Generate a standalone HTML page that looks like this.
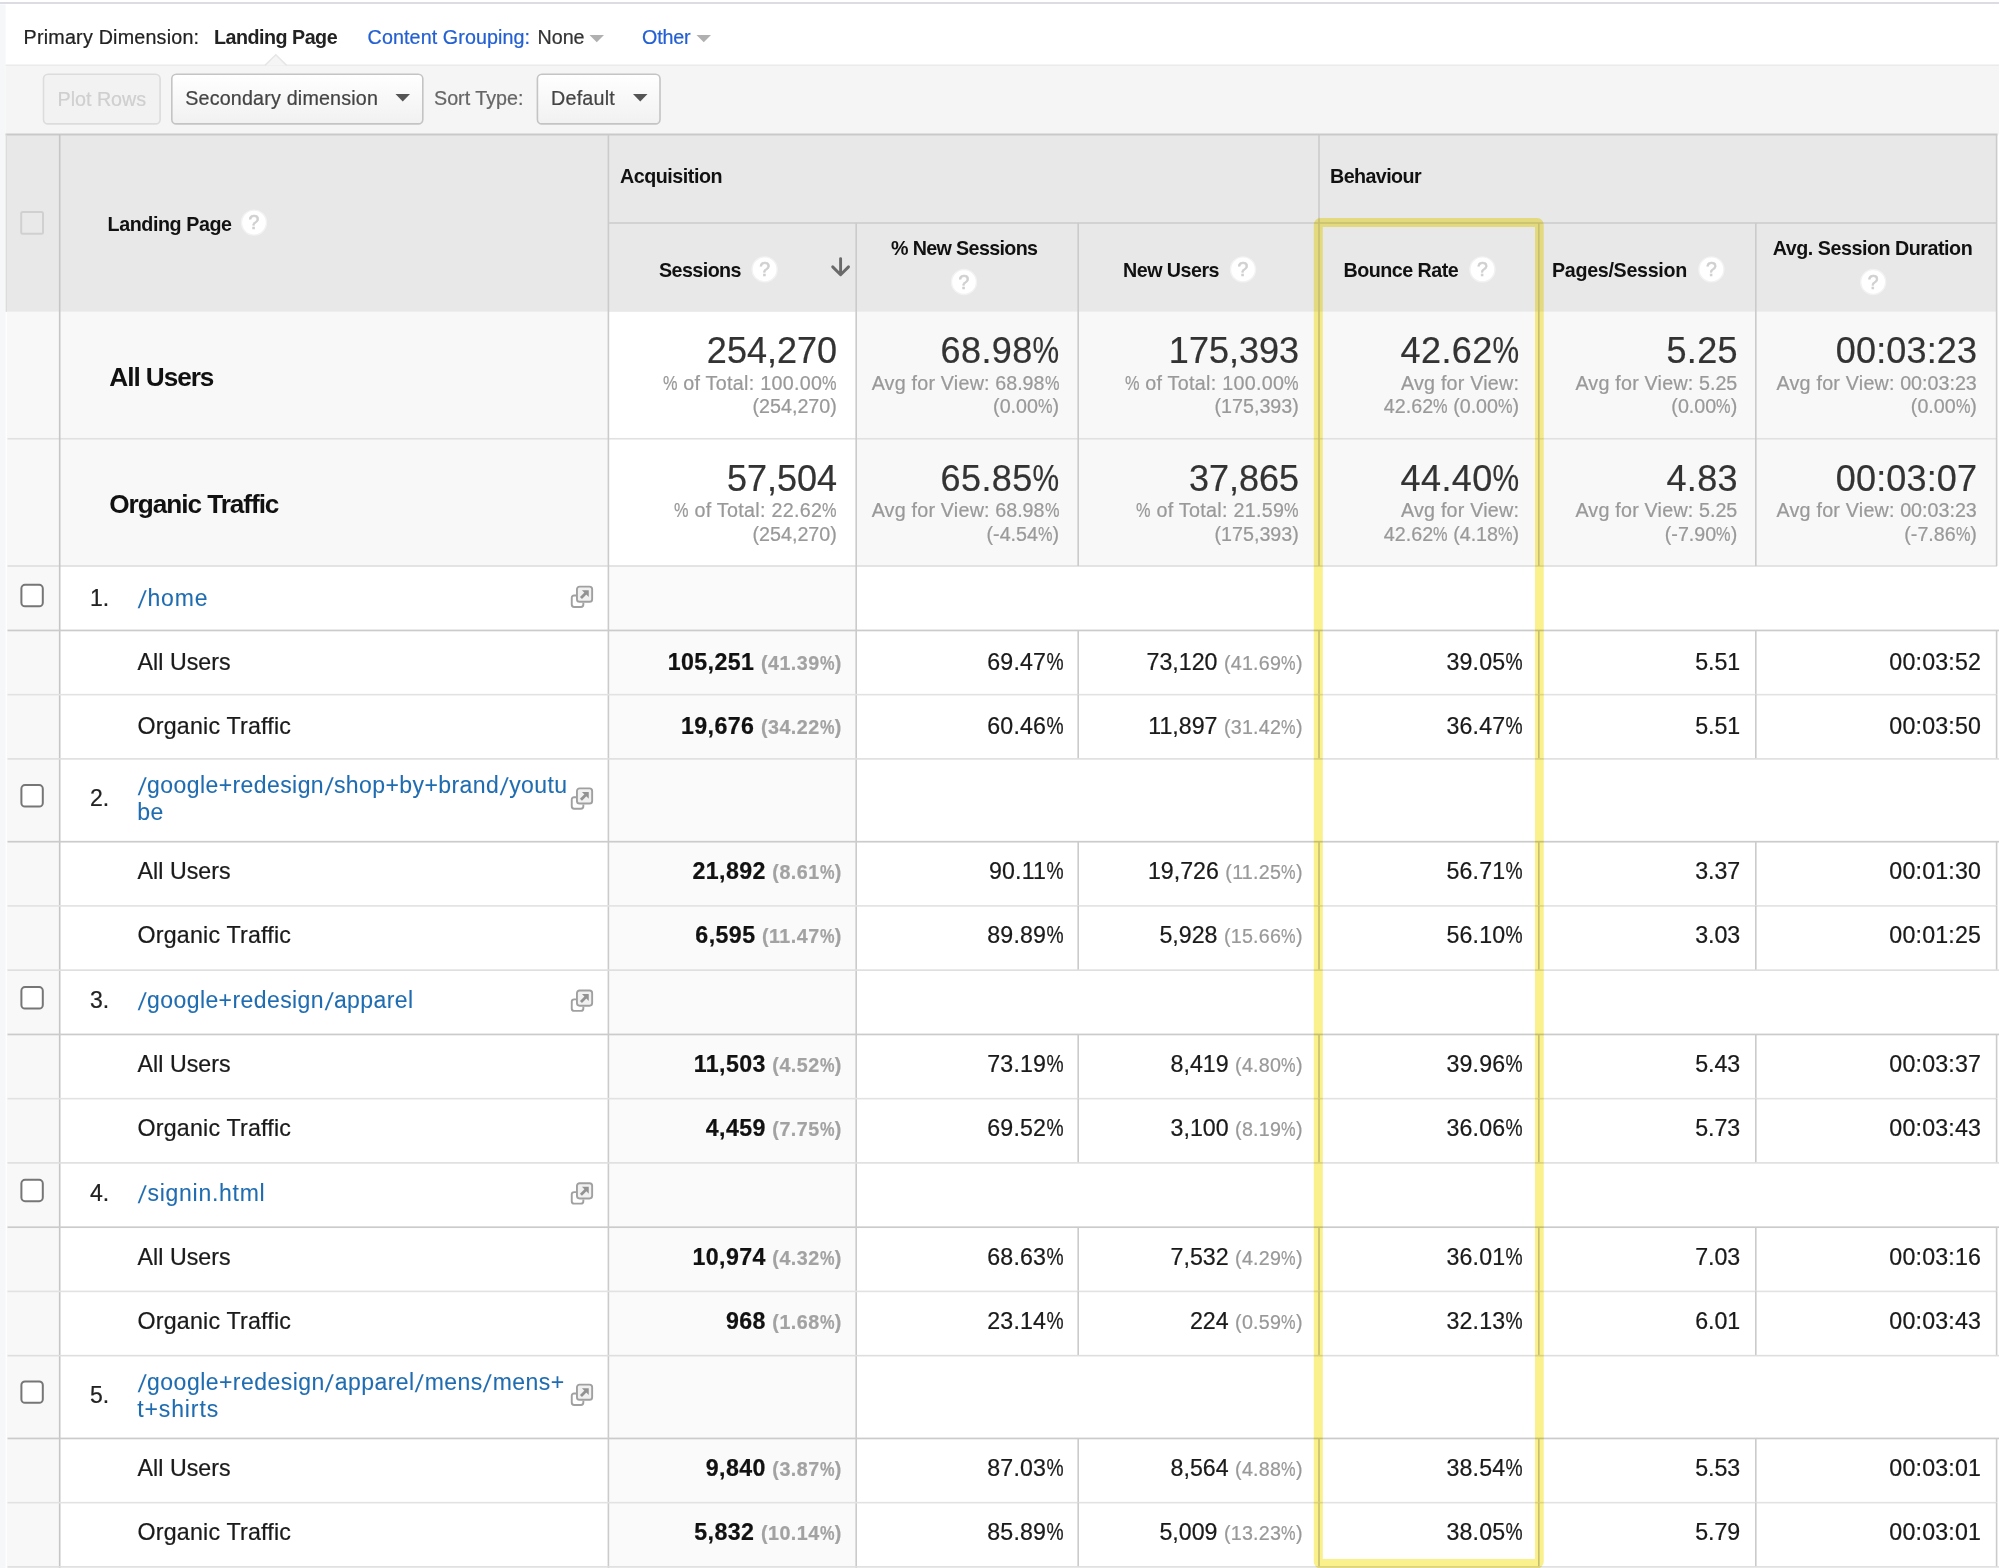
<!DOCTYPE html>
<html lang="en"><head><meta charset="utf-8"><title>Landing Pages</title>
<style>
html,body{margin:0;padding:0}
body{width:1999px;height:1568px;overflow:hidden;position:relative;background:#fff;font-family:"Liberation Sans", sans-serif;}
svg.bg,svg.fg{position:absolute;left:0;top:0}
.t{position:absolute;white-space:nowrap;display:block}
.hl{position:absolute;left:0;top:0;mix-blend-mode:multiply}

.t b,b{font-weight:700;letter-spacing:0.42px}
.p{font-size:19.7px;color:#999;font-weight:400;letter-spacing:0.25px}
.pc{display:inline-block;font-style:normal;transform:scaleX(.83);transform-origin:100% 50%;margin-left:-0.151em}
.sl{display:inline-block;font-style:normal;transform:translateY(0.045em) skewX(-8deg) scaleY(1.07);margin:0 0.067em}
.av{letter-spacing:0.22px}
.pb{font-weight:700;letter-spacing:0.5px;color:#a2a2a2}
</style></head>
<body>
<svg class="bg" width="1999" height="1568" viewBox="0 0 1999 1568">
<rect x="0" y="0" width="1999.00" height="1568.00" fill="#fff" />
<rect x="0" y="4.5" width="5.60" height="1563.50" fill="#f6f7f9" />
<rect x="0" y="2" width="1999.00" height="2.00" fill="#dcdce3" />
<rect x="5.6" y="65.4" width="1993.40" height="69.10" fill="#f5f5f5" />
<rect x="5.6" y="64.50" width="1993.40" height="1.4" fill="#e9e9e9"/>
<path d="M265.5 65.6 L275.8 55.2 L286.2 65.6 Z" fill="#f5f5f5"/><path d="M265 65.4 L275.8 54.8 L286.6 65.4" fill="none" stroke="#e6e6e6" stroke-width="1.5"/>
<rect x="6" y="134.5" width="1991.00" height="177.30" fill="#e8e8e8" />
<rect x="5.5" y="133.50" width="1992.00" height="2" fill="#c9c9c9"/>
<rect x="6.8" y="311.8" width="52.90" height="1256.20" fill="#f8f8f8" />
<rect x="59.7" y="311.8" width="548.70" height="254.20" fill="#f8f8f8" />
<rect x="856.2" y="311.8" width="1140.80" height="254.20" fill="#f8f8f8" />
<rect x="608.4" y="566" width="247.80" height="1002.00" fill="#fafafa" />
<rect x="608.4" y="222.20" width="1388.60" height="1.6" fill="#cdcdcd"/>
<rect x="7.5" y="437.95" width="1989.50" height="1.6" fill="#e1e1e1"/>
<rect x="7.5" y="565.20" width="1989.50" height="1.6" fill="#dedede"/>
<rect x="58.90" y="134.5" width="1.6" height="1433.50" fill="#c6c6c6"/>
<rect x="607.60" y="134.5" width="1.6" height="1433.50" fill="#cbcbcb"/>
<rect x="855.40" y="223" width="1.6" height="1345.00" fill="#cbcbcb"/>
<rect x="1077.40" y="223" width="1.6" height="343.00" fill="#cbcbcb"/>
<rect x="1318.20" y="134.5" width="1.6" height="431.50" fill="#cbcbcb"/>
<rect x="1538.00" y="223" width="1.6" height="343.00" fill="#cbcbcb"/>
<rect x="1755.00" y="223" width="1.6" height="343.00" fill="#cbcbcb"/>
<rect x="1995.80" y="134.5" width="1.6" height="431.50" fill="#cbcbcb"/>
<defs><linearGradient id="bg1" x1="0" y1="0" x2="0" y2="1"><stop offset="0" stop-color="#ffffff"/><stop offset="1" stop-color="#f1f1f1"/></linearGradient></defs>
<rect x="43.5" y="74.3" width="116.6" height="49.6" rx="4.5" fill="#f2f2f2" stroke="#dcdcdc" stroke-width="1.6"/>
<rect x="171.8" y="74.3" width="251" height="49.6" rx="4.5" fill="url(#bg1)" stroke="#c4c4c4" stroke-width="1.6"/>
<rect x="537.4" y="74.3" width="122.6" height="49.6" rx="4.5" fill="url(#bg1)" stroke="#c4c4c4" stroke-width="1.6"/>
<rect x="5.60" y="134.5" width="1.4" height="177.30" fill="#dcdcdc"/>
<rect x="7.5" y="629.60" width="1991.50" height="1.7" fill="#cbcbcb"/>
<rect x="1077.40" y="630.25" width="1.6" height="64.25" fill="#cbcbcb"/>
<rect x="1318.20" y="630.25" width="1.6" height="64.25" fill="#cbcbcb"/>
<rect x="1538.00" y="630.25" width="1.6" height="64.25" fill="#cbcbcb"/>
<rect x="1755.00" y="630.25" width="1.6" height="64.25" fill="#cbcbcb"/>
<rect x="1995.80" y="630.25" width="1.6" height="64.25" fill="#cbcbcb"/>
<rect x="7.5" y="693.85" width="1989.50" height="1.6" fill="#e2e2e2"/>
<rect x="1077.40" y="694.5" width="1.6" height="64.25" fill="#cbcbcb"/>
<rect x="1318.20" y="694.5" width="1.6" height="64.25" fill="#cbcbcb"/>
<rect x="1538.00" y="694.5" width="1.6" height="64.25" fill="#cbcbcb"/>
<rect x="1755.00" y="694.5" width="1.6" height="64.25" fill="#cbcbcb"/>
<rect x="1995.80" y="694.5" width="1.6" height="64.25" fill="#cbcbcb"/>
<rect x="7.5" y="758.10" width="1991.50" height="1.6" fill="#dedede"/>
<rect x="7.5" y="840.85" width="1991.50" height="1.7" fill="#cbcbcb"/>
<rect x="1077.40" y="841.5" width="1.6" height="64.25" fill="#cbcbcb"/>
<rect x="1318.20" y="841.5" width="1.6" height="64.25" fill="#cbcbcb"/>
<rect x="1538.00" y="841.5" width="1.6" height="64.25" fill="#cbcbcb"/>
<rect x="1755.00" y="841.5" width="1.6" height="64.25" fill="#cbcbcb"/>
<rect x="1995.80" y="841.5" width="1.6" height="64.25" fill="#cbcbcb"/>
<rect x="7.5" y="905.10" width="1989.50" height="1.6" fill="#e2e2e2"/>
<rect x="1077.40" y="905.75" width="1.6" height="64.25" fill="#cbcbcb"/>
<rect x="1318.20" y="905.75" width="1.6" height="64.25" fill="#cbcbcb"/>
<rect x="1538.00" y="905.75" width="1.6" height="64.25" fill="#cbcbcb"/>
<rect x="1755.00" y="905.75" width="1.6" height="64.25" fill="#cbcbcb"/>
<rect x="1995.80" y="905.75" width="1.6" height="64.25" fill="#cbcbcb"/>
<rect x="7.5" y="969.35" width="1991.50" height="1.6" fill="#dedede"/>
<rect x="7.5" y="1033.60" width="1991.50" height="1.7" fill="#cbcbcb"/>
<rect x="1077.40" y="1034.25" width="1.6" height="64.25" fill="#cbcbcb"/>
<rect x="1318.20" y="1034.25" width="1.6" height="64.25" fill="#cbcbcb"/>
<rect x="1538.00" y="1034.25" width="1.6" height="64.25" fill="#cbcbcb"/>
<rect x="1755.00" y="1034.25" width="1.6" height="64.25" fill="#cbcbcb"/>
<rect x="1995.80" y="1034.25" width="1.6" height="64.25" fill="#cbcbcb"/>
<rect x="7.5" y="1097.85" width="1989.50" height="1.6" fill="#e2e2e2"/>
<rect x="1077.40" y="1098.5" width="1.6" height="64.25" fill="#cbcbcb"/>
<rect x="1318.20" y="1098.5" width="1.6" height="64.25" fill="#cbcbcb"/>
<rect x="1538.00" y="1098.5" width="1.6" height="64.25" fill="#cbcbcb"/>
<rect x="1755.00" y="1098.5" width="1.6" height="64.25" fill="#cbcbcb"/>
<rect x="1995.80" y="1098.5" width="1.6" height="64.25" fill="#cbcbcb"/>
<rect x="7.5" y="1162.10" width="1991.50" height="1.6" fill="#dedede"/>
<rect x="7.5" y="1226.35" width="1991.50" height="1.7" fill="#cbcbcb"/>
<rect x="1077.40" y="1227.0" width="1.6" height="64.25" fill="#cbcbcb"/>
<rect x="1318.20" y="1227.0" width="1.6" height="64.25" fill="#cbcbcb"/>
<rect x="1538.00" y="1227.0" width="1.6" height="64.25" fill="#cbcbcb"/>
<rect x="1755.00" y="1227.0" width="1.6" height="64.25" fill="#cbcbcb"/>
<rect x="1995.80" y="1227.0" width="1.6" height="64.25" fill="#cbcbcb"/>
<rect x="7.5" y="1290.60" width="1989.50" height="1.6" fill="#e2e2e2"/>
<rect x="1077.40" y="1291.25" width="1.6" height="64.25" fill="#cbcbcb"/>
<rect x="1318.20" y="1291.25" width="1.6" height="64.25" fill="#cbcbcb"/>
<rect x="1538.00" y="1291.25" width="1.6" height="64.25" fill="#cbcbcb"/>
<rect x="1755.00" y="1291.25" width="1.6" height="64.25" fill="#cbcbcb"/>
<rect x="1995.80" y="1291.25" width="1.6" height="64.25" fill="#cbcbcb"/>
<rect x="7.5" y="1354.85" width="1991.50" height="1.6" fill="#dedede"/>
<rect x="7.5" y="1437.60" width="1991.50" height="1.7" fill="#cbcbcb"/>
<rect x="1077.40" y="1438.25" width="1.6" height="64.25" fill="#cbcbcb"/>
<rect x="1318.20" y="1438.25" width="1.6" height="64.25" fill="#cbcbcb"/>
<rect x="1538.00" y="1438.25" width="1.6" height="64.25" fill="#cbcbcb"/>
<rect x="1755.00" y="1438.25" width="1.6" height="64.25" fill="#cbcbcb"/>
<rect x="1995.80" y="1438.25" width="1.6" height="64.25" fill="#cbcbcb"/>
<rect x="7.5" y="1501.85" width="1989.50" height="1.6" fill="#e2e2e2"/>
<rect x="1077.40" y="1502.5" width="1.6" height="64.25" fill="#cbcbcb"/>
<rect x="1318.20" y="1502.5" width="1.6" height="64.25" fill="#cbcbcb"/>
<rect x="1538.00" y="1502.5" width="1.6" height="64.25" fill="#cbcbcb"/>
<rect x="1755.00" y="1502.5" width="1.6" height="64.25" fill="#cbcbcb"/>
<rect x="1995.80" y="1502.5" width="1.6" height="64.25" fill="#cbcbcb"/>
<rect x="7.5" y="1566.10" width="1991.50" height="1.6" fill="#dedede"/>
</svg>

<svg class="fg" width="1999" height="1568" viewBox="0 0 1999 1568">
<path d="M589.5 35 H604 L596.75 42.3 Z" fill="#b0b0b0"/>
<path d="M696.5 35 H711 L703.75 42.3 Z" fill="#b0b0b0"/>
<path d="M395.5 94 H410 L402.75 101.5 Z" fill="#555"/>
<path d="M633 94 H647.5 L640.25 101.5 Z" fill="#555"/>
<rect x="21.2" y="212" width="21.8" height="21.8" rx="1.5" fill="#e9e9e9" stroke="#d0d0d0" stroke-width="2"/>
<circle cx="254" cy="222.6" r="13.2" fill="#fff" opacity="0.45"/><circle cx="254" cy="222.6" r="11.8" fill="#fff"/>
<circle cx="764.6" cy="269.4" r="13.2" fill="#fff" opacity="0.45"/><circle cx="764.6" cy="269.4" r="11.8" fill="#fff"/>
<path d="M840.6 258.6 V274.3 M832.7 266.9 L840.6 274.8 L848.5 266.9" fill="none" stroke="#6a6a6a" stroke-width="2.9" stroke-linecap="round" stroke-linejoin="round"/>
<circle cx="964" cy="282" r="13.2" fill="#fff" opacity="0.45"/><circle cx="964" cy="282" r="11.8" fill="#fff"/>
<circle cx="1243" cy="269.4" r="13.2" fill="#fff" opacity="0.45"/><circle cx="1243" cy="269.4" r="11.8" fill="#fff"/>
<circle cx="1482.4" cy="269.4" r="13.2" fill="#fff" opacity="0.45"/><circle cx="1482.4" cy="269.4" r="11.8" fill="#fff"/>
<circle cx="1711.4" cy="269.4" r="13.2" fill="#fff" opacity="0.45"/><circle cx="1711.4" cy="269.4" r="11.8" fill="#fff"/>
<circle cx="1873.2" cy="282" r="13.2" fill="#fff" opacity="0.45"/><circle cx="1873.2" cy="282" r="11.8" fill="#fff"/>
<rect x="21.4" y="584.85" width="21.4" height="21.4" rx="3.6" fill="#fff" stroke="#767676" stroke-width="2"/>
<g transform="translate(570.75,585.60)" fill="none" stroke="#a0a0a0" stroke-width="1.9"><path d="M5.6 9.9 H3.4 Q1 9.9 1 12.3 V19 Q1 21.4 3.4 21.4 H10.2 Q12.6 21.4 12.6 19 V17.2"/><rect x="6.2" y="1" width="15.2" height="15.2" rx="2.6" fill="#f1f1f1"/><path d="M10.2 12.4 L15.4 7.2" stroke-width="2.8" stroke="#929292"/><path d="M11.2 4.6 H18 V11.4 Z" fill="#929292" stroke="none"/></g>
<rect x="21.4" y="785.10" width="21.4" height="21.4" rx="3.6" fill="#fff" stroke="#767676" stroke-width="2"/>
<g transform="translate(570.75,787.35)" fill="none" stroke="#a0a0a0" stroke-width="1.9"><path d="M5.6 9.9 H3.4 Q1 9.9 1 12.3 V19 Q1 21.4 3.4 21.4 H10.2 Q12.6 21.4 12.6 19 V17.2"/><rect x="6.2" y="1" width="15.2" height="15.2" rx="2.6" fill="#f1f1f1"/><path d="M10.2 12.4 L15.4 7.2" stroke-width="2.8" stroke="#929292"/><path d="M11.2 4.6 H18 V11.4 Z" fill="#929292" stroke="none"/></g>
<rect x="21.4" y="987.10" width="21.4" height="21.4" rx="3.6" fill="#fff" stroke="#767676" stroke-width="2"/>
<g transform="translate(570.75,989.50)" fill="none" stroke="#a0a0a0" stroke-width="1.9"><path d="M5.6 9.9 H3.4 Q1 9.9 1 12.3 V19 Q1 21.4 3.4 21.4 H10.2 Q12.6 21.4 12.6 19 V17.2"/><rect x="6.2" y="1" width="15.2" height="15.2" rx="2.6" fill="#f1f1f1"/><path d="M10.2 12.4 L15.4 7.2" stroke-width="2.8" stroke="#929292"/><path d="M11.2 4.6 H18 V11.4 Z" fill="#929292" stroke="none"/></g>
<rect x="21.4" y="1179.80" width="21.4" height="21.4" rx="3.6" fill="#fff" stroke="#767676" stroke-width="2"/>
<g transform="translate(570.75,1182.25)" fill="none" stroke="#a0a0a0" stroke-width="1.9"><path d="M5.6 9.9 H3.4 Q1 9.9 1 12.3 V19 Q1 21.4 3.4 21.4 H10.2 Q12.6 21.4 12.6 19 V17.2"/><rect x="6.2" y="1" width="15.2" height="15.2" rx="2.6" fill="#f1f1f1"/><path d="M10.2 12.4 L15.4 7.2" stroke-width="2.8" stroke="#929292"/><path d="M11.2 4.6 H18 V11.4 Z" fill="#929292" stroke="none"/></g>
<rect x="21.4" y="1381.45" width="21.4" height="21.4" rx="3.6" fill="#fff" stroke="#767676" stroke-width="2"/>
<g transform="translate(570.75,1383.60)" fill="none" stroke="#a0a0a0" stroke-width="1.9"><path d="M5.6 9.9 H3.4 Q1 9.9 1 12.3 V19 Q1 21.4 3.4 21.4 H10.2 Q12.6 21.4 12.6 19 V17.2"/><rect x="6.2" y="1" width="15.2" height="15.2" rx="2.6" fill="#f1f1f1"/><path d="M10.2 12.4 L15.4 7.2" stroke-width="2.8" stroke="#929292"/><path d="M11.2 4.6 H18 V11.4 Z" fill="#929292" stroke="none"/></g>
</svg>
<span class="t" style="left:23.60px;top:24.17px;font-size:19.7px;line-height:26px;color:#222;-webkit-text-stroke:0.22px;letter-spacing:0.22px;">Primary Dimension:</span>
<span class="t" style="left:214.00px;top:24.17px;font-size:19.7px;line-height:26px;color:#222;font-weight:700;letter-spacing:-0.5px;">Landing Page</span>
<span class="t" style="left:367.60px;top:24.17px;font-size:19.7px;line-height:26px;color:#2360d3;-webkit-text-stroke:0.22px;letter-spacing:0.1px;">Content Grouping:</span>
<span class="t" style="left:537.50px;top:24.17px;font-size:19.7px;line-height:26px;color:#333;-webkit-text-stroke:0.22px;">None</span>
<span class="t" style="left:642.00px;top:24.17px;font-size:19.7px;line-height:26px;color:#2360d3;-webkit-text-stroke:0.22px;letter-spacing:-0.15px;">Other</span>
<span class="t" style="left:57.50px;top:86.17px;font-size:19.7px;line-height:26px;color:#cfcfcf;-webkit-text-stroke:0.22px;">Plot Rows</span>
<span class="t" style="left:185.20px;top:84.67px;font-size:19.7px;line-height:26px;color:#444;-webkit-text-stroke:0.22px;letter-spacing:0.19px;">Secondary dimension</span>
<span class="t" style="left:434.00px;top:84.67px;font-size:19.7px;line-height:26px;color:#666;-webkit-text-stroke:0.22px;">Sort Type:</span>
<span class="t" style="left:551.00px;top:84.67px;font-size:19.7px;line-height:26px;color:#444;-webkit-text-stroke:0.22px;letter-spacing:0.23px;">Default</span>
<span class="t" style="left:107.60px;top:211.17px;font-size:19.7px;line-height:26px;color:#111;font-weight:700;letter-spacing:-0.42px;">Landing Page</span>
<span class="t" style="left:254.00px;transform:translateX(-50%);top:210.24px;font-size:19.5px;line-height:25px;color:#d0d0d0;-webkit-text-stroke:0.22px;-webkit-text-stroke:0.6px;">?</span>
<span class="t" style="left:620.00px;top:163.17px;font-size:19.7px;line-height:26px;color:#111;font-weight:700;letter-spacing:-0.47px;">Acquisition</span>
<span class="t" style="left:1330.00px;top:163.17px;font-size:19.7px;line-height:26px;color:#111;font-weight:700;letter-spacing:-0.59px;">Behaviour</span>
<span class="t" style="left:659.00px;top:257.17px;font-size:19.7px;line-height:26px;color:#111;font-weight:700;letter-spacing:-0.56px;">Sessions</span>
<span class="t" style="left:764.60px;transform:translateX(-50%);top:257.04px;font-size:19.5px;line-height:25px;color:#d0d0d0;-webkit-text-stroke:0.22px;-webkit-text-stroke:0.6px;">?</span>
<span class="t" style="left:891.00px;top:235.17px;font-size:19.7px;line-height:26px;color:#111;font-weight:700;letter-spacing:-0.64px;">% New Sessions</span>
<span class="t" style="left:964.00px;transform:translateX(-50%);top:269.64px;font-size:19.5px;line-height:25px;color:#d0d0d0;-webkit-text-stroke:0.22px;-webkit-text-stroke:0.6px;">?</span>
<span class="t" style="left:1123.00px;top:257.17px;font-size:19.7px;line-height:26px;color:#111;font-weight:700;letter-spacing:-0.52px;">New Users</span>
<span class="t" style="left:1243.00px;transform:translateX(-50%);top:257.04px;font-size:19.5px;line-height:25px;color:#d0d0d0;-webkit-text-stroke:0.22px;-webkit-text-stroke:0.6px;">?</span>
<span class="t" style="left:1343.60px;top:257.17px;font-size:19.7px;line-height:26px;color:#111;font-weight:700;letter-spacing:-0.53px;">Bounce Rate</span>
<span class="t" style="left:1482.40px;transform:translateX(-50%);top:257.04px;font-size:19.5px;line-height:25px;color:#d0d0d0;-webkit-text-stroke:0.22px;-webkit-text-stroke:0.6px;">?</span>
<span class="t" style="left:1552.00px;top:257.17px;font-size:19.7px;line-height:26px;color:#111;font-weight:700;letter-spacing:-0.31px;">Pages/Session</span>
<span class="t" style="left:1711.40px;transform:translateX(-50%);top:257.04px;font-size:19.5px;line-height:25px;color:#d0d0d0;-webkit-text-stroke:0.22px;-webkit-text-stroke:0.6px;">?</span>
<span class="t" style="left:1772.80px;top:235.17px;font-size:19.7px;line-height:26px;color:#111;font-weight:700;letter-spacing:-0.47px;">Avg. Session Duration</span>
<span class="t" style="left:1873.20px;transform:translateX(-50%);top:269.64px;font-size:19.5px;line-height:25px;color:#d0d0d0;-webkit-text-stroke:0.22px;-webkit-text-stroke:0.6px;">?</span>
<span class="t" style="left:109.30px;top:359.92px;font-size:26.2px;line-height:34px;color:#111;font-weight:700;letter-spacing:-1.05px;">All Users</span>
<span class="t" style="right:1162.00px;top:327.43px;font-size:36px;line-height:47px;color:#333;-webkit-text-stroke:0.22px;">254,270</span>
<span class="t" style="right:1161.90px;top:369.57px;font-size:19.7px;line-height:26px;color:#999;-webkit-text-stroke:0.22px;letter-spacing:0.3px;"><i class="pc">%</i> of Total: 100.00<i class="pc">%</i></span>
<span class="t" style="right:1162.20px;top:393.37px;font-size:19.7px;line-height:26px;color:#999;-webkit-text-stroke:0.22px;">(254,270)</span>
<span class="t" style="right:939.35px;top:327.43px;font-size:36px;line-height:47px;color:#333;-webkit-text-stroke:0.22px;letter-spacing:0.4px;">68.98<i class="pc">%</i></span>
<span class="t" style="right:939.95px;top:369.57px;font-size:19.7px;line-height:26px;color:#999;-webkit-text-stroke:0.22px;"><span class="av">Avg for View:</span> 68.98<i class="pc">%</i></span>
<span class="t" style="right:939.95px;top:393.37px;font-size:19.7px;line-height:26px;color:#999;-webkit-text-stroke:0.22px;">(0.00<i class="pc">%</i>)</span>
<span class="t" style="right:700.00px;top:327.43px;font-size:36px;line-height:47px;color:#333;-webkit-text-stroke:0.22px;">175,393</span>
<span class="t" style="right:699.90px;top:369.57px;font-size:19.7px;line-height:26px;color:#999;-webkit-text-stroke:0.22px;letter-spacing:0.3px;"><i class="pc">%</i> of Total: 100.00<i class="pc">%</i></span>
<span class="t" style="right:700.20px;top:393.37px;font-size:19.7px;line-height:26px;color:#999;-webkit-text-stroke:0.22px;">(175,393)</span>
<span class="t" style="right:479.30px;top:327.43px;font-size:36px;line-height:47px;color:#333;-webkit-text-stroke:0.22px;letter-spacing:0.4px;">42.62<i class="pc">%</i></span>
<span class="t" style="right:479.90px;top:369.57px;font-size:19.7px;line-height:26px;color:#999;-webkit-text-stroke:0.22px;"><span class="av">Avg for View:</span></span>
<span class="t" style="right:479.90px;top:393.37px;font-size:19.7px;line-height:26px;color:#999;-webkit-text-stroke:0.22px;">42.62<i class="pc">%</i> (0.00<i class="pc">%</i>)</span>
<span class="t" style="right:261.20px;top:327.43px;font-size:36px;line-height:47px;color:#333;-webkit-text-stroke:0.22px;letter-spacing:0.3px;">5.25</span>
<span class="t" style="right:261.70px;top:369.57px;font-size:19.7px;line-height:26px;color:#999;-webkit-text-stroke:0.22px;"><span class="av">Avg for View:</span> 5.25</span>
<span class="t" style="right:261.70px;top:393.37px;font-size:19.7px;line-height:26px;color:#999;-webkit-text-stroke:0.22px;">(0.00<i class="pc">%</i>)</span>
<span class="t" style="right:21.85px;top:327.43px;font-size:36px;line-height:47px;color:#333;-webkit-text-stroke:0.22px;letter-spacing:0.15px;">00:03:23</span>
<span class="t" style="right:22.20px;top:369.57px;font-size:19.7px;line-height:26px;color:#999;-webkit-text-stroke:0.22px;"><span class="av">Avg for View:</span> 00:03:23</span>
<span class="t" style="right:22.20px;top:393.37px;font-size:19.7px;line-height:26px;color:#999;-webkit-text-stroke:0.22px;">(0.00<i class="pc">%</i>)</span>
<span class="t" style="left:109.30px;top:486.87px;font-size:26.2px;line-height:34px;color:#111;font-weight:700;letter-spacing:-1.05px;">Organic Traffic</span>
<span class="t" style="right:1162.00px;top:455.28px;font-size:36px;line-height:47px;color:#333;-webkit-text-stroke:0.22px;">57,504</span>
<span class="t" style="right:1161.90px;top:496.92px;font-size:19.7px;line-height:26px;color:#999;-webkit-text-stroke:0.22px;letter-spacing:0.3px;"><i class="pc">%</i> of Total: 22.62<i class="pc">%</i></span>
<span class="t" style="right:1162.20px;top:520.72px;font-size:19.7px;line-height:26px;color:#999;-webkit-text-stroke:0.22px;">(254,270)</span>
<span class="t" style="right:939.35px;top:455.28px;font-size:36px;line-height:47px;color:#333;-webkit-text-stroke:0.22px;letter-spacing:0.4px;">65.85<i class="pc">%</i></span>
<span class="t" style="right:939.95px;top:496.92px;font-size:19.7px;line-height:26px;color:#999;-webkit-text-stroke:0.22px;"><span class="av">Avg for View:</span> 68.98<i class="pc">%</i></span>
<span class="t" style="right:939.95px;top:520.72px;font-size:19.7px;line-height:26px;color:#999;-webkit-text-stroke:0.22px;">(-4.54<i class="pc">%</i>)</span>
<span class="t" style="right:700.00px;top:455.28px;font-size:36px;line-height:47px;color:#333;-webkit-text-stroke:0.22px;">37,865</span>
<span class="t" style="right:699.90px;top:496.92px;font-size:19.7px;line-height:26px;color:#999;-webkit-text-stroke:0.22px;letter-spacing:0.3px;"><i class="pc">%</i> of Total: 21.59<i class="pc">%</i></span>
<span class="t" style="right:700.20px;top:520.72px;font-size:19.7px;line-height:26px;color:#999;-webkit-text-stroke:0.22px;">(175,393)</span>
<span class="t" style="right:479.30px;top:455.28px;font-size:36px;line-height:47px;color:#333;-webkit-text-stroke:0.22px;letter-spacing:0.4px;">44.40<i class="pc">%</i></span>
<span class="t" style="right:479.90px;top:496.92px;font-size:19.7px;line-height:26px;color:#999;-webkit-text-stroke:0.22px;"><span class="av">Avg for View:</span></span>
<span class="t" style="right:479.90px;top:520.72px;font-size:19.7px;line-height:26px;color:#999;-webkit-text-stroke:0.22px;">42.62<i class="pc">%</i> (4.18<i class="pc">%</i>)</span>
<span class="t" style="right:261.20px;top:455.28px;font-size:36px;line-height:47px;color:#333;-webkit-text-stroke:0.22px;letter-spacing:0.3px;">4.83</span>
<span class="t" style="right:261.70px;top:496.92px;font-size:19.7px;line-height:26px;color:#999;-webkit-text-stroke:0.22px;"><span class="av">Avg for View:</span> 5.25</span>
<span class="t" style="right:261.70px;top:520.72px;font-size:19.7px;line-height:26px;color:#999;-webkit-text-stroke:0.22px;">(-7.90<i class="pc">%</i>)</span>
<span class="t" style="right:21.85px;top:455.28px;font-size:36px;line-height:47px;color:#333;-webkit-text-stroke:0.22px;letter-spacing:0.15px;">00:03:07</span>
<span class="t" style="right:22.20px;top:496.92px;font-size:19.7px;line-height:26px;color:#999;-webkit-text-stroke:0.22px;"><span class="av">Avg for View:</span> 00:03:23</span>
<span class="t" style="right:22.20px;top:520.72px;font-size:19.7px;line-height:26px;color:#999;-webkit-text-stroke:0.22px;">(-7.86<i class="pc">%</i>)</span>
<span class="t" style="left:90.00px;top:582.73px;font-size:23px;line-height:30px;color:#222;-webkit-text-stroke:0.22px;">1.</span>
<span class="t" style="left:137.20px;top:582.73px;font-size:23px;line-height:30px;color:#1f6cb1;-webkit-text-stroke:0.22px;letter-spacing:0.825px;-webkit-text-stroke:0.08px;"><i class="sl">/</i>home</span>
<span class="t" style="left:137.50px;top:646.81px;font-size:23.2px;line-height:30px;color:#1a1a1a;-webkit-text-stroke:0.22px;letter-spacing:0.05px;">All Users</span>
<span class="t" style="right:1157.20px;top:646.81px;font-size:23.2px;line-height:30px;color:#111;-webkit-text-stroke:0.22px;"><b>105,251</b> <span class="p pb">(41.39<i class="pc">%</i>)</span></span>
<span class="t" style="right:935.65px;top:646.81px;font-size:23.2px;line-height:30px;color:#1a1a1a;-webkit-text-stroke:0.22px;letter-spacing:0.15px;">69.47<i class="pc">%</i></span>
<span class="t" style="right:696.20px;top:646.81px;font-size:23.2px;line-height:30px;color:#1a1a1a;-webkit-text-stroke:0.22px;">73,120 <span class="p q">(41.69<i class="pc">%</i>)</span></span>
<span class="t" style="right:476.45px;top:646.81px;font-size:23.2px;line-height:30px;color:#1a1a1a;-webkit-text-stroke:0.22px;letter-spacing:0.15px;">39.05<i class="pc">%</i></span>
<span class="t" style="right:259.00px;top:646.81px;font-size:23.2px;line-height:30px;color:#1a1a1a;-webkit-text-stroke:0.22px;letter-spacing:-0.1px;">5.51</span>
<span class="t" style="right:17.80px;top:646.81px;font-size:23.2px;line-height:30px;color:#1a1a1a;-webkit-text-stroke:0.22px;letter-spacing:0.2px;">00:03:52</span>
<span class="t" style="left:137.50px;top:711.06px;font-size:23.2px;line-height:30px;color:#1a1a1a;-webkit-text-stroke:0.22px;letter-spacing:0.22px;">Organic Traffic</span>
<span class="t" style="right:1157.20px;top:711.06px;font-size:23.2px;line-height:30px;color:#111;-webkit-text-stroke:0.22px;"><b>19,676</b> <span class="p pb">(34.22<i class="pc">%</i>)</span></span>
<span class="t" style="right:935.65px;top:711.06px;font-size:23.2px;line-height:30px;color:#1a1a1a;-webkit-text-stroke:0.22px;letter-spacing:0.15px;">60.46<i class="pc">%</i></span>
<span class="t" style="right:696.20px;top:711.06px;font-size:23.2px;line-height:30px;color:#1a1a1a;-webkit-text-stroke:0.22px;">11,897 <span class="p q">(31.42<i class="pc">%</i>)</span></span>
<span class="t" style="right:476.45px;top:711.06px;font-size:23.2px;line-height:30px;color:#1a1a1a;-webkit-text-stroke:0.22px;letter-spacing:0.15px;">36.47<i class="pc">%</i></span>
<span class="t" style="right:259.00px;top:711.06px;font-size:23.2px;line-height:30px;color:#1a1a1a;-webkit-text-stroke:0.22px;letter-spacing:-0.1px;">5.51</span>
<span class="t" style="right:17.80px;top:711.06px;font-size:23.2px;line-height:30px;color:#1a1a1a;-webkit-text-stroke:0.22px;letter-spacing:0.2px;">00:03:50</span>
<span class="t" style="left:90.00px;top:782.88px;font-size:23px;line-height:30px;color:#222;-webkit-text-stroke:0.22px;">2.</span>
<span class="t" style="left:137.20px;top:770.08px;font-size:23px;line-height:30px;color:#1f6cb1;-webkit-text-stroke:0.22px;letter-spacing:0.419px;-webkit-text-stroke:0.08px;"><i class="sl">/</i>google+redesign<i class="sl">/</i>shop+by+brand<i class="sl">/</i>youtu</span>
<span class="t" style="left:137.20px;top:797.18px;font-size:23px;line-height:30px;color:#1f6cb1;-webkit-text-stroke:0.22px;letter-spacing:0.406px;-webkit-text-stroke:0.08px;">be</span>
<span class="t" style="left:137.50px;top:855.76px;font-size:23.2px;line-height:30px;color:#1a1a1a;-webkit-text-stroke:0.22px;letter-spacing:0.05px;">All Users</span>
<span class="t" style="right:1157.20px;top:855.76px;font-size:23.2px;line-height:30px;color:#111;-webkit-text-stroke:0.22px;"><b>21,892</b> <span class="p pb">(8.61<i class="pc">%</i>)</span></span>
<span class="t" style="right:935.65px;top:855.76px;font-size:23.2px;line-height:30px;color:#1a1a1a;-webkit-text-stroke:0.22px;letter-spacing:0.15px;">90.11<i class="pc">%</i></span>
<span class="t" style="right:696.20px;top:855.76px;font-size:23.2px;line-height:30px;color:#1a1a1a;-webkit-text-stroke:0.22px;">19,726 <span class="p q">(11.25<i class="pc">%</i>)</span></span>
<span class="t" style="right:476.45px;top:855.76px;font-size:23.2px;line-height:30px;color:#1a1a1a;-webkit-text-stroke:0.22px;letter-spacing:0.15px;">56.71<i class="pc">%</i></span>
<span class="t" style="right:259.00px;top:855.76px;font-size:23.2px;line-height:30px;color:#1a1a1a;-webkit-text-stroke:0.22px;letter-spacing:-0.1px;">3.37</span>
<span class="t" style="right:17.80px;top:855.76px;font-size:23.2px;line-height:30px;color:#1a1a1a;-webkit-text-stroke:0.22px;letter-spacing:0.2px;">00:01:30</span>
<span class="t" style="left:137.50px;top:920.01px;font-size:23.2px;line-height:30px;color:#1a1a1a;-webkit-text-stroke:0.22px;letter-spacing:0.22px;">Organic Traffic</span>
<span class="t" style="right:1157.20px;top:920.01px;font-size:23.2px;line-height:30px;color:#111;-webkit-text-stroke:0.22px;"><b>6,595</b> <span class="p pb">(11.47<i class="pc">%</i>)</span></span>
<span class="t" style="right:935.65px;top:920.01px;font-size:23.2px;line-height:30px;color:#1a1a1a;-webkit-text-stroke:0.22px;letter-spacing:0.15px;">89.89<i class="pc">%</i></span>
<span class="t" style="right:696.20px;top:920.01px;font-size:23.2px;line-height:30px;color:#1a1a1a;-webkit-text-stroke:0.22px;">5,928 <span class="p q">(15.66<i class="pc">%</i>)</span></span>
<span class="t" style="right:476.45px;top:920.01px;font-size:23.2px;line-height:30px;color:#1a1a1a;-webkit-text-stroke:0.22px;letter-spacing:0.15px;">56.10<i class="pc">%</i></span>
<span class="t" style="right:259.00px;top:920.01px;font-size:23.2px;line-height:30px;color:#1a1a1a;-webkit-text-stroke:0.22px;letter-spacing:-0.1px;">3.03</span>
<span class="t" style="right:17.80px;top:920.01px;font-size:23.2px;line-height:30px;color:#1a1a1a;-webkit-text-stroke:0.22px;letter-spacing:0.2px;">00:01:25</span>
<span class="t" style="left:90.00px;top:984.73px;font-size:23px;line-height:30px;color:#222;-webkit-text-stroke:0.22px;">3.</span>
<span class="t" style="left:137.20px;top:984.73px;font-size:23px;line-height:30px;color:#1f6cb1;-webkit-text-stroke:0.22px;letter-spacing:0.414px;-webkit-text-stroke:0.08px;"><i class="sl">/</i>google+redesign<i class="sl">/</i>apparel</span>
<span class="t" style="left:137.50px;top:1049.01px;font-size:23.2px;line-height:30px;color:#1a1a1a;-webkit-text-stroke:0.22px;letter-spacing:0.05px;">All Users</span>
<span class="t" style="right:1157.20px;top:1049.01px;font-size:23.2px;line-height:30px;color:#111;-webkit-text-stroke:0.22px;"><b>11,503</b> <span class="p pb">(4.52<i class="pc">%</i>)</span></span>
<span class="t" style="right:935.65px;top:1049.01px;font-size:23.2px;line-height:30px;color:#1a1a1a;-webkit-text-stroke:0.22px;letter-spacing:0.15px;">73.19<i class="pc">%</i></span>
<span class="t" style="right:696.20px;top:1049.01px;font-size:23.2px;line-height:30px;color:#1a1a1a;-webkit-text-stroke:0.22px;">8,419 <span class="p q">(4.80<i class="pc">%</i>)</span></span>
<span class="t" style="right:476.45px;top:1049.01px;font-size:23.2px;line-height:30px;color:#1a1a1a;-webkit-text-stroke:0.22px;letter-spacing:0.15px;">39.96<i class="pc">%</i></span>
<span class="t" style="right:259.00px;top:1049.01px;font-size:23.2px;line-height:30px;color:#1a1a1a;-webkit-text-stroke:0.22px;letter-spacing:-0.1px;">5.43</span>
<span class="t" style="right:17.80px;top:1049.01px;font-size:23.2px;line-height:30px;color:#1a1a1a;-webkit-text-stroke:0.22px;letter-spacing:0.2px;">00:03:37</span>
<span class="t" style="left:137.50px;top:1113.26px;font-size:23.2px;line-height:30px;color:#1a1a1a;-webkit-text-stroke:0.22px;letter-spacing:0.22px;">Organic Traffic</span>
<span class="t" style="right:1157.20px;top:1113.26px;font-size:23.2px;line-height:30px;color:#111;-webkit-text-stroke:0.22px;"><b>4,459</b> <span class="p pb">(7.75<i class="pc">%</i>)</span></span>
<span class="t" style="right:935.65px;top:1113.26px;font-size:23.2px;line-height:30px;color:#1a1a1a;-webkit-text-stroke:0.22px;letter-spacing:0.15px;">69.52<i class="pc">%</i></span>
<span class="t" style="right:696.20px;top:1113.26px;font-size:23.2px;line-height:30px;color:#1a1a1a;-webkit-text-stroke:0.22px;">3,100 <span class="p q">(8.19<i class="pc">%</i>)</span></span>
<span class="t" style="right:476.45px;top:1113.26px;font-size:23.2px;line-height:30px;color:#1a1a1a;-webkit-text-stroke:0.22px;letter-spacing:0.15px;">36.06<i class="pc">%</i></span>
<span class="t" style="right:259.00px;top:1113.26px;font-size:23.2px;line-height:30px;color:#1a1a1a;-webkit-text-stroke:0.22px;letter-spacing:-0.1px;">5.73</span>
<span class="t" style="right:17.80px;top:1113.26px;font-size:23.2px;line-height:30px;color:#1a1a1a;-webkit-text-stroke:0.22px;letter-spacing:0.2px;">00:03:43</span>
<span class="t" style="left:90.00px;top:1177.98px;font-size:23px;line-height:30px;color:#222;-webkit-text-stroke:0.22px;">4.</span>
<span class="t" style="left:137.20px;top:1177.98px;font-size:23px;line-height:30px;color:#1f6cb1;-webkit-text-stroke:0.22px;letter-spacing:0.737px;-webkit-text-stroke:0.08px;"><i class="sl">/</i>signin.html</span>
<span class="t" style="left:137.50px;top:1241.56px;font-size:23.2px;line-height:30px;color:#1a1a1a;-webkit-text-stroke:0.22px;letter-spacing:0.05px;">All Users</span>
<span class="t" style="right:1157.20px;top:1241.56px;font-size:23.2px;line-height:30px;color:#111;-webkit-text-stroke:0.22px;"><b>10,974</b> <span class="p pb">(4.32<i class="pc">%</i>)</span></span>
<span class="t" style="right:935.65px;top:1241.56px;font-size:23.2px;line-height:30px;color:#1a1a1a;-webkit-text-stroke:0.22px;letter-spacing:0.15px;">68.63<i class="pc">%</i></span>
<span class="t" style="right:696.20px;top:1241.56px;font-size:23.2px;line-height:30px;color:#1a1a1a;-webkit-text-stroke:0.22px;">7,532 <span class="p q">(4.29<i class="pc">%</i>)</span></span>
<span class="t" style="right:476.45px;top:1241.56px;font-size:23.2px;line-height:30px;color:#1a1a1a;-webkit-text-stroke:0.22px;letter-spacing:0.15px;">36.01<i class="pc">%</i></span>
<span class="t" style="right:259.00px;top:1241.56px;font-size:23.2px;line-height:30px;color:#1a1a1a;-webkit-text-stroke:0.22px;letter-spacing:-0.1px;">7.03</span>
<span class="t" style="right:17.80px;top:1241.56px;font-size:23.2px;line-height:30px;color:#1a1a1a;-webkit-text-stroke:0.22px;letter-spacing:0.2px;">00:03:16</span>
<span class="t" style="left:137.50px;top:1305.81px;font-size:23.2px;line-height:30px;color:#1a1a1a;-webkit-text-stroke:0.22px;letter-spacing:0.22px;">Organic Traffic</span>
<span class="t" style="right:1157.20px;top:1305.81px;font-size:23.2px;line-height:30px;color:#111;-webkit-text-stroke:0.22px;"><b>968</b> <span class="p pb">(1.68<i class="pc">%</i>)</span></span>
<span class="t" style="right:935.65px;top:1305.81px;font-size:23.2px;line-height:30px;color:#1a1a1a;-webkit-text-stroke:0.22px;letter-spacing:0.15px;">23.14<i class="pc">%</i></span>
<span class="t" style="right:696.20px;top:1305.81px;font-size:23.2px;line-height:30px;color:#1a1a1a;-webkit-text-stroke:0.22px;">224 <span class="p q">(0.59<i class="pc">%</i>)</span></span>
<span class="t" style="right:476.45px;top:1305.81px;font-size:23.2px;line-height:30px;color:#1a1a1a;-webkit-text-stroke:0.22px;letter-spacing:0.15px;">32.13<i class="pc">%</i></span>
<span class="t" style="right:259.00px;top:1305.81px;font-size:23.2px;line-height:30px;color:#1a1a1a;-webkit-text-stroke:0.22px;letter-spacing:-0.1px;">6.01</span>
<span class="t" style="right:17.80px;top:1305.81px;font-size:23.2px;line-height:30px;color:#1a1a1a;-webkit-text-stroke:0.22px;letter-spacing:0.2px;">00:03:43</span>
<span class="t" style="left:90.00px;top:1379.53px;font-size:23px;line-height:30px;color:#222;-webkit-text-stroke:0.22px;">5.</span>
<span class="t" style="left:137.20px;top:1366.53px;font-size:23px;line-height:30px;color:#1f6cb1;-webkit-text-stroke:0.22px;letter-spacing:0.464px;-webkit-text-stroke:0.08px;"><i class="sl">/</i>google+redesign<i class="sl">/</i>apparel<i class="sl">/</i>mens<i class="sl">/</i>mens+</span>
<span class="t" style="left:137.20px;top:1394.03px;font-size:23px;line-height:30px;color:#1f6cb1;-webkit-text-stroke:0.22px;letter-spacing:0.888px;-webkit-text-stroke:0.08px;">t+shirts</span>
<span class="t" style="left:137.50px;top:1452.71px;font-size:23.2px;line-height:30px;color:#1a1a1a;-webkit-text-stroke:0.22px;letter-spacing:0.05px;">All Users</span>
<span class="t" style="right:1157.20px;top:1452.71px;font-size:23.2px;line-height:30px;color:#111;-webkit-text-stroke:0.22px;"><b>9,840</b> <span class="p pb">(3.87<i class="pc">%</i>)</span></span>
<span class="t" style="right:935.65px;top:1452.71px;font-size:23.2px;line-height:30px;color:#1a1a1a;-webkit-text-stroke:0.22px;letter-spacing:0.15px;">87.03<i class="pc">%</i></span>
<span class="t" style="right:696.20px;top:1452.71px;font-size:23.2px;line-height:30px;color:#1a1a1a;-webkit-text-stroke:0.22px;">8,564 <span class="p q">(4.88<i class="pc">%</i>)</span></span>
<span class="t" style="right:476.45px;top:1452.71px;font-size:23.2px;line-height:30px;color:#1a1a1a;-webkit-text-stroke:0.22px;letter-spacing:0.15px;">38.54<i class="pc">%</i></span>
<span class="t" style="right:259.00px;top:1452.71px;font-size:23.2px;line-height:30px;color:#1a1a1a;-webkit-text-stroke:0.22px;letter-spacing:-0.1px;">5.53</span>
<span class="t" style="right:17.80px;top:1452.71px;font-size:23.2px;line-height:30px;color:#1a1a1a;-webkit-text-stroke:0.22px;letter-spacing:0.2px;">00:03:01</span>
<span class="t" style="left:137.50px;top:1516.96px;font-size:23.2px;line-height:30px;color:#1a1a1a;-webkit-text-stroke:0.22px;letter-spacing:0.22px;">Organic Traffic</span>
<span class="t" style="right:1157.20px;top:1516.96px;font-size:23.2px;line-height:30px;color:#111;-webkit-text-stroke:0.22px;"><b>5,832</b> <span class="p pb">(10.14<i class="pc">%</i>)</span></span>
<span class="t" style="right:935.65px;top:1516.96px;font-size:23.2px;line-height:30px;color:#1a1a1a;-webkit-text-stroke:0.22px;letter-spacing:0.15px;">85.89<i class="pc">%</i></span>
<span class="t" style="right:696.20px;top:1516.96px;font-size:23.2px;line-height:30px;color:#1a1a1a;-webkit-text-stroke:0.22px;">5,009 <span class="p q">(13.23<i class="pc">%</i>)</span></span>
<span class="t" style="right:476.45px;top:1516.96px;font-size:23.2px;line-height:30px;color:#1a1a1a;-webkit-text-stroke:0.22px;letter-spacing:0.15px;">38.05<i class="pc">%</i></span>
<span class="t" style="right:259.00px;top:1516.96px;font-size:23.2px;line-height:30px;color:#1a1a1a;-webkit-text-stroke:0.22px;letter-spacing:-0.1px;">5.79</span>
<span class="t" style="right:17.80px;top:1516.96px;font-size:23.2px;line-height:30px;color:#1a1a1a;-webkit-text-stroke:0.22px;letter-spacing:0.2px;">00:03:01</span>
<svg class="hl" width="1999" height="1568" viewBox="0 0 1999 1568"><path fill="#faf08c" fill-rule="evenodd" d="M1320.3 218 H1537.2 A6.5 6.5 0 0 1 1543.7 224.5 V1562 A6.5 6.5 0 0 1 1537.2 1568.5 H1320.3 A6.5 6.5 0 0 1 1313.8 1562 V224.5 A6.5 6.5 0 0 1 1320.3 218 Z M1322.8 227.1 V1559 H1535 V227.1 Z"/></svg>
</body></html>
